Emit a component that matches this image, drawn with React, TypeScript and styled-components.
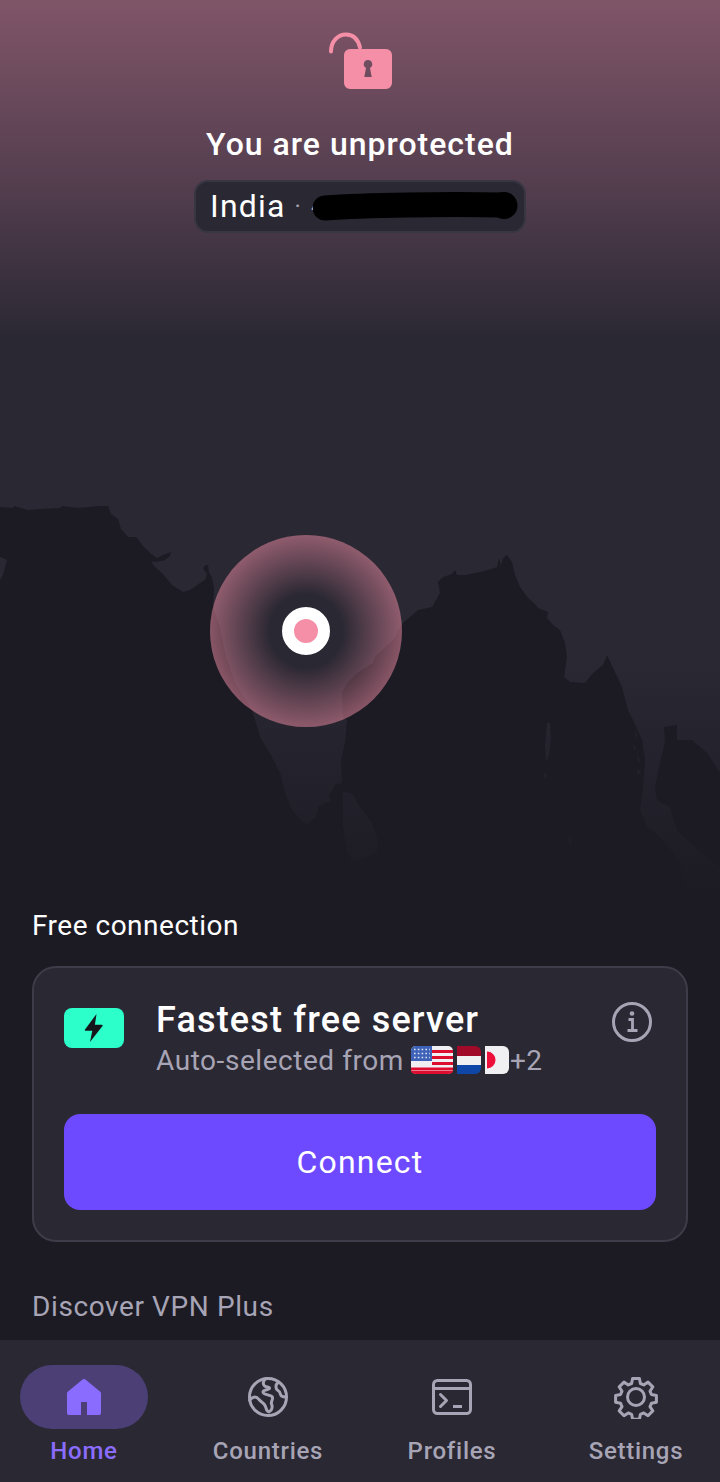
import React from 'react';
import styled, { createGlobalStyle } from 'styled-components';

const GlobalStyle = createGlobalStyle`
  html, body {
    margin: 0;
    padding: 0;
    background: #1c1b24;
  }
  * {
    box-sizing: border-box;
  }
`;

const Page = styled.div`
  position: relative;
  width: 720px;
  height: 1482px;
  overflow: hidden;
  display: flex;
  flex-direction: column;
  font-family: Roboto, 'Liberation Sans', sans-serif;
  color: #fff;
  background: linear-gradient(
    180deg,
    #805568 0,
    #574051 170px,
    #2a2833 340px,
    #2a2833 660px,
    #1c1b24 890px
  );
`;

const MapLayer = styled.svg`
  position: absolute;
  left: 0;
  top: 480px;
  width: 720px;
  height: 440px;
`;

const Pin = styled.div`
  position: absolute;
  left: 210px;
  top: 535px;
  width: 192px;
  height: 192px;
  border-radius: 50%;
  display: flex;
  align-items: center;
  justify-content: center;
  background: radial-gradient(
    circle closest-side,
    rgba(244, 143, 167, 0) 38%,
    rgba(244, 143, 167, 0.2) 62%,
    rgba(244, 143, 167, 0.5) 100%
  );
`;

const PinDot = styled.div`
  width: 48px;
  height: 48px;
  border-radius: 50%;
  border: 12px solid #fff;
  background: #f48fa7;
`;

const Hero = styled.header`
  position: relative;
  display: flex;
  flex-direction: column;
  align-items: center;
  padding-top: 32px;
`;

const LockIcon = styled.svg`
  display: block;
  width: 64px;
  height: 58px;
  color: #f48fa7;
`;

const Title = styled.h1`
  margin: 36px 0 0;
  font-size: 32px;
  line-height: 37px;
  font-weight: 500;
  letter-spacing: 1px;
`;

const IpChip = styled.div`
  position: relative;
  margin-top: 17px;
  width: 332px;
  height: 53px;
  padding: 0 14px 2px;
  display: flex;
  align-items: center;
  gap: 9px;
  border: 2px solid #383642;
  border-radius: 14px;
  background: #2a2833;
  font-size: 32px;
  letter-spacing: 1.2px;
`;

const IpText = styled.span`
  font-size: 24px;
  color: #a7a4b5;
`;

const Redaction = styled.svg`
  position: absolute;
  left: 117px;
  top: 4px;
  width: 208px;
  height: 40px;
`;

const Spacer = styled.div`
  flex: 1;
`;

const Content = styled.main`
  position: relative;
  padding: 0 32px;
`;

const SectionLabel = styled.h2<{ $muted?: boolean }>`
  margin: 0;
  font-size: 28px;
  line-height: 36px;
  font-weight: 400;
  letter-spacing: ${(p) => (p.$muted ? '0.6px' : '0.5px')};
  color: ${(p) => (p.$muted ? '#a7a4b5' : '#fff')};
`;

const Card = styled.section`
  margin: 22px 0 47px;
  height: 276px;
  padding: 30px 30px 0;
  border: 2px solid #3e3c48;
  border-radius: 24px;
  background: #2a2833;
`;

const ServerRow = styled.div`
  display: flex;
  align-items: flex-start;
  height: 116px;
`;

const BoltBadge = styled.div`
  width: 60px;
  height: 40px;
  margin-top: 10px;
  flex: none;
  display: flex;
  align-items: center;
  justify-content: center;
  border-radius: 8px;
  background: #2cffc9;
`;

const ServerText = styled.div`
  margin-left: 32px;
  padding-top: 1px;
  flex: 1;
`;

const ServerName = styled.div`
  font-size: 36px;
  line-height: 42px;
  font-weight: 500;
  letter-spacing: 1.17px;
`;

const ServerSub = styled.div`
  display: flex;
  align-items: center;
  height: 40px;
  margin-top: -1px;
  font-size: 28px;
  letter-spacing: 0.55px;
  color: #a7a4b5;
`;

const Flags = styled.span`
  display: flex;
  align-items: center;
  gap: 4px;
  margin: 0 1px 0 7px;
`;

const Flag = styled.svg`
  display: block;
  height: 28px;
`;

const InfoIcon = styled.svg`
  display: block;
  width: 44px;
  height: 44px;
  margin: 2px 2px 0 0;
  color: #a7a4b5;
`;

const ConnectButton = styled.button`
  display: block;
  width: 100%;
  height: 96px;
  border: 0;
  border-radius: 16px;
  background: #6d4aff;
  color: #fff;
  font-family: inherit;
  font-size: 32px;
  letter-spacing: 1.2px;
`;

const NavBar = styled.nav`
  position: relative;
  margin-top: 15px;
  height: 142px;
  padding: 25px 20px 0;
  display: flex;
  justify-content: space-between;
  background: #2a2833;
`;

const NavItem = styled.div<{ $active?: boolean }>`
  width: 128px;
  display: flex;
  flex-direction: column;
  align-items: center;
  color: ${(p) => (p.$active ? '#8a6dff' : '#a7a4b5')};
`;

const NavIconWrap = styled.div<{ $active?: boolean }>`
  width: 128px;
  height: 64px;
  display: flex;
  align-items: center;
  justify-content: center;
  border-radius: 32px;
  background: ${(p) => (p.$active ? '#4b3f75' : 'transparent')};
`;

const NavLabel = styled.span`
  margin-top: 6px;
  font-size: 24px;
  line-height: 32px;
  font-weight: 500;
  letter-spacing: 0.72px;
  white-space: nowrap;
`;

const NavIcon = styled.svg`
  display: block;
  width: 44px;
  height: 44px;
`;

// coast outline in page coordinates (the layer's viewBox starts at y=480)
const SEA =
  'M0 507 L13 508 L14 506 L28 510 L40 509 L60 508 L62 506 L78 508 L100 506 L108 506 L111 514 L118 519 L121 529 L128 537 L136 537 L143 546 L150 553 L157 558 L163 555 L171 552 L170 556 L165 560 L156 562 L152 561 L153 565 L162 573 L172 585 L183 592 L190 590 L200 583 L205 580 L207 574 L203 568 L206 565 L208 565 L209 572 L212 578 L214 588 L213 607 L220 627 L225 653 L235 683 L252 710 L255 720 L260 737 L272 757 L280 773 L285 793 L292 810 L302 822 L307 824 L315 818 L318 813 L318 807 L325 803 L331 802 L329 796 L335 785 L342 783 L341 760 L345 743 L347 720 L343 717 L342 693 L347 683 L357 673 L373 663 L375 657 L393 640 L403 623 L410 617 L418 610 L432 607 L440 593 L438 582 L443 577 L452 574 L455 570 L457 575 L465 575 L480 572 L488 570 L497 567 L499 558 L501 565 L503 558 L507 555 L512 562 L515 575 L520 587 L528 598 L534 603 L538 608 L548 612 L547 618 L553 625 L560 630 L565 643 L567 657 L564 677 L570 682 L585 683 L593 673 L603 665 L607 655 L613 668 L622 687 L628 710 L633 720 L642 740 L645 760 L643 787 L640 810 L647 827 L663 840 L680 863 L684 920 L0 920 Z ' +
  'M0 557 L7 560 L3 575 L0 580 Z ' +
  'M343 792 L352 793 L360 807 L372 823 L378 840 L377 852 L363 860 L353 862 L347 853 L343 827 Z ' +
  'M547 723 L550 723 L551 740 L549 755 L546 763 L545 745 Z ' +
  'M545 772 L547 776 L545 779 L544 776 Z ' +
  'M569 835 L572 840 L571 847 L568 842 Z ' +
  'M635 729 L637 735 L636 740 Z M633 744 L636 748 L634 750 Z M637 755 L640 760 L638 762 Z M637 769 L641 772 L638 775 Z';

const SEA_EAST =
  'M664 727 L677 725 L677 740 L692 740 L707 753 L720 773 L720 867 L690 843 L677 830 L670 807 L657 800 L655 787 L660 763 L665 742 Z';

const GEAR =
  'M18.600 3.500h6.800l1 5 3.300 1.400 4.300-2.800 4.800 4.800-2.800 4.300 1.400 3.300 5 1v6.800l-5 1-1.400 3.300 2.800 4.300-4.800 4.800-4.300-2.800-3.300 1.400-1 5h-6.800l-1-5-3.300-1.400-4.300 2.800-4.800-4.800 2.800-4.300-1.400-3.300-5-1v-6.800l5-1 1.400-3.300-2.800-4.300 4.800-4.800 4.300 2.800 3.300-1.400z';

const App = () => {
  return (
    <>
      <GlobalStyle />
      <Page>
        <MapLayer viewBox="0 480 720 440">
          <path fill="#1c1b24" fillRule="evenodd" d={SEA} />
          <path fill="#1c1b24" d={SEA_EAST} />
        </MapLayer>
        <Pin>
          <PinDot />
        </Pin>

        <Hero>
          <LockIcon viewBox="0 0 64 58">
            <path
              d="M3 19.500C3 9 10 2.500 18 2.500c7 0 12 4.500 14 13"
              fill="none"
              stroke="currentColor"
              strokeWidth="4"
              strokeLinecap="round"
            />
            <path
              fillRule="evenodd"
              fill="currentColor"
              d="M22 17h36a6 6 0 0 1 6 6v28a6 6 0 0 1-6 6H22a6 6 0 0 1-6-6V23a6 6 0 0 1 6-6z M40 28a4.200 4.200 0 0 0-2 7.900L36.300 45h7.400L42 35.900A4.200 4.200 0 0 0 40 28z"
            />
          </LockIcon>
          <Title>You are unprotected</Title>
          <IpChip>
            India
            <IpText>·</IpText>
            <IpText>4</IpText>
            <Redaction viewBox="0 0 208 40">
              <path
                d="M12 22c40 -3 120 -4 178 -3"
                fill="none"
                stroke="#000"
                strokeWidth="25"
                strokeLinecap="round"
              />
              <circle cx="191" cy="19.500" r="13.500" fill="#000" />
            </Redaction>
          </IpChip>
        </Hero>

        <Spacer />

        <Content>
          <SectionLabel>Free connection</SectionLabel>
          <Card>
            <ServerRow>
              <BoltBadge>
                <svg width="24" height="30" viewBox="0 0 24 30">
                  <path
                    fill="#14161b"
                    d="M14.500 1 3 16.500a.8.8 0 0 0 .7 1.300h6.600L8 29l12.500-16a.8.8 0 0 0-.6-1.300h-7z"
                  />
                </svg>
              </BoltBadge>
              <ServerText>
                <ServerName>Fastest free server</ServerName>
                <ServerSub>
                  Auto-selected from
                  <Flags>
                    <Flag viewBox="0 0 42 28" width="42">
                      <rect width="42" height="28" rx="5" fill="#f0f0f2" />
                      <path
                        fill="#dd0d30"
                        d="M21 4h21v3H21zM21 10h21v3H21zM21 16h21v3H21zM0 21.500h42v3H0z"
                      />
                      <path fill="#dd0d30" d="M0 25h42a5 3 0 0 1-5 3H5a5 3 0 0 1-5-3z" />
                      <path fill="#3e62b8" d="M5 0h16v15H0V5a5 5 0 0 1 5-5z" />
                      <path
                        stroke="#dfe4f5"
                        strokeWidth="1.600"
                        strokeDasharray="1.600 2.200"
                        d="M3 3.500h16M3 7.500h16M3 11.500h16"
                      />
                    </Flag>
                    <Flag viewBox="0 0 24 28" width="24">
                      <path fill="#a10a28" d="M0 0h18a6 6 0 0 1 6 6v4H0z" />
                      <path fill="#f0f0f2" d="M0 10h24v9H0z" />
                      <path fill="#0f47a8" d="M0 19h24v3a6 6 0 0 1-6 6H0z" />
                    </Flag>
                    <Flag viewBox="0 0 24 28" width="24">
                      <path fill="#f0f0f2" d="M0 0h18a6 6 0 0 1 6 6v16a6 6 0 0 1-6 6H0z" />
                      <path fill="#ee0e3a" d="M2 5.500a8.500 8.500 0 0 1 0 17z" />
                    </Flag>
                  </Flags>
                  +2
                </ServerSub>
              </ServerText>
              <InfoIcon viewBox="0 0 44 44">
                <circle cx="22" cy="22" r="18.500" fill="none" stroke="currentColor" strokeWidth="3" />
                <circle cx="22" cy="13.500" r="2.300" fill="currentColor" />
                <path
                  d="M18.500 19.500H22.500V30M17.500 30.500h10"
                  fill="none"
                  stroke="currentColor"
                  strokeWidth="2.800"
                />
              </InfoIcon>
            </ServerRow>
            <ConnectButton>Connect</ConnectButton>
          </Card>
          <SectionLabel $muted>Discover VPN Plus</SectionLabel>
        </Content>

        <NavBar>
          <NavItem $active>
            <NavIconWrap $active>
              <NavIcon viewBox="0 0 44 44">
                <path
                  fill="currentColor"
                  d="M20.300 4.700a2.600 2.600 0 0 1 3.400 0L38 16.600c.8.700 1 1.300 1 2.300V38a2 2 0 0 1-2 2H25V27h-6v13H7a2 2 0 0 1-2-2V18.900c0-1 .2-1.600 1-2.300z"
                />
              </NavIcon>
            </NavIconWrap>
            <NavLabel>Home</NavLabel>
          </NavItem>
          <NavItem>
            <NavIconWrap>
              <NavIcon viewBox="0 0 44 44" fill="none" stroke="currentColor" strokeWidth="3" strokeLinejoin="round" strokeLinecap="round">
                <circle cx="22" cy="22" r="18.500" />
                <path d="M19.700 3.700C17 6 16.500 9 18.500 10.800C20.500 12.500 23.500 11.500 23.500 13.300C23.500 15 17 14.500 17 17C17 20 24 19.500 26 21.500C28 24 24.500 26 25.500 29C26.500 31 26.500 35 23.500 36.500C20.500 37.500 20.500 33 19 30.500C17.500 27.500 15 27 13 24.500C10.500 21 7 21 3.700 25" />
                <path d="M32 7.500C29 10 29.500 14 32 15.500C35 17 34 20 35.500 21C37 22 38.500 22 40 22" />
              </NavIcon>
            </NavIconWrap>
            <NavLabel>Countries</NavLabel>
          </NavItem>
          <NavItem>
            <NavIconWrap>
              <NavIcon viewBox="0 0 44 44" fill="none" stroke="currentColor" strokeWidth="3" strokeLinejoin="round" strokeLinecap="round">
                <rect x="3.500" y="5.500" width="37" height="33" rx="4" />
                <path d="M3.500 13.500h37" strokeLinecap="butt" />
                <path d="M10.500 19.500l6 6-6 6" />
                <path d="M23 31.500h9" strokeLinecap="butt" />
              </NavIcon>
            </NavIconWrap>
            <NavLabel>Profiles</NavLabel>
          </NavItem>
          <NavItem>
            <NavIconWrap>
              <NavIcon viewBox="0 0 44 44" fill="none" stroke="currentColor" strokeWidth="3" strokeLinejoin="round">
                <path d={GEAR} />
                <circle cx="22" cy="22" r="8.500" />
              </NavIcon>
            </NavIconWrap>
            <NavLabel>Settings</NavLabel>
          </NavItem>
        </NavBar>
      </Page>
    </>
  );
};

export default App;
